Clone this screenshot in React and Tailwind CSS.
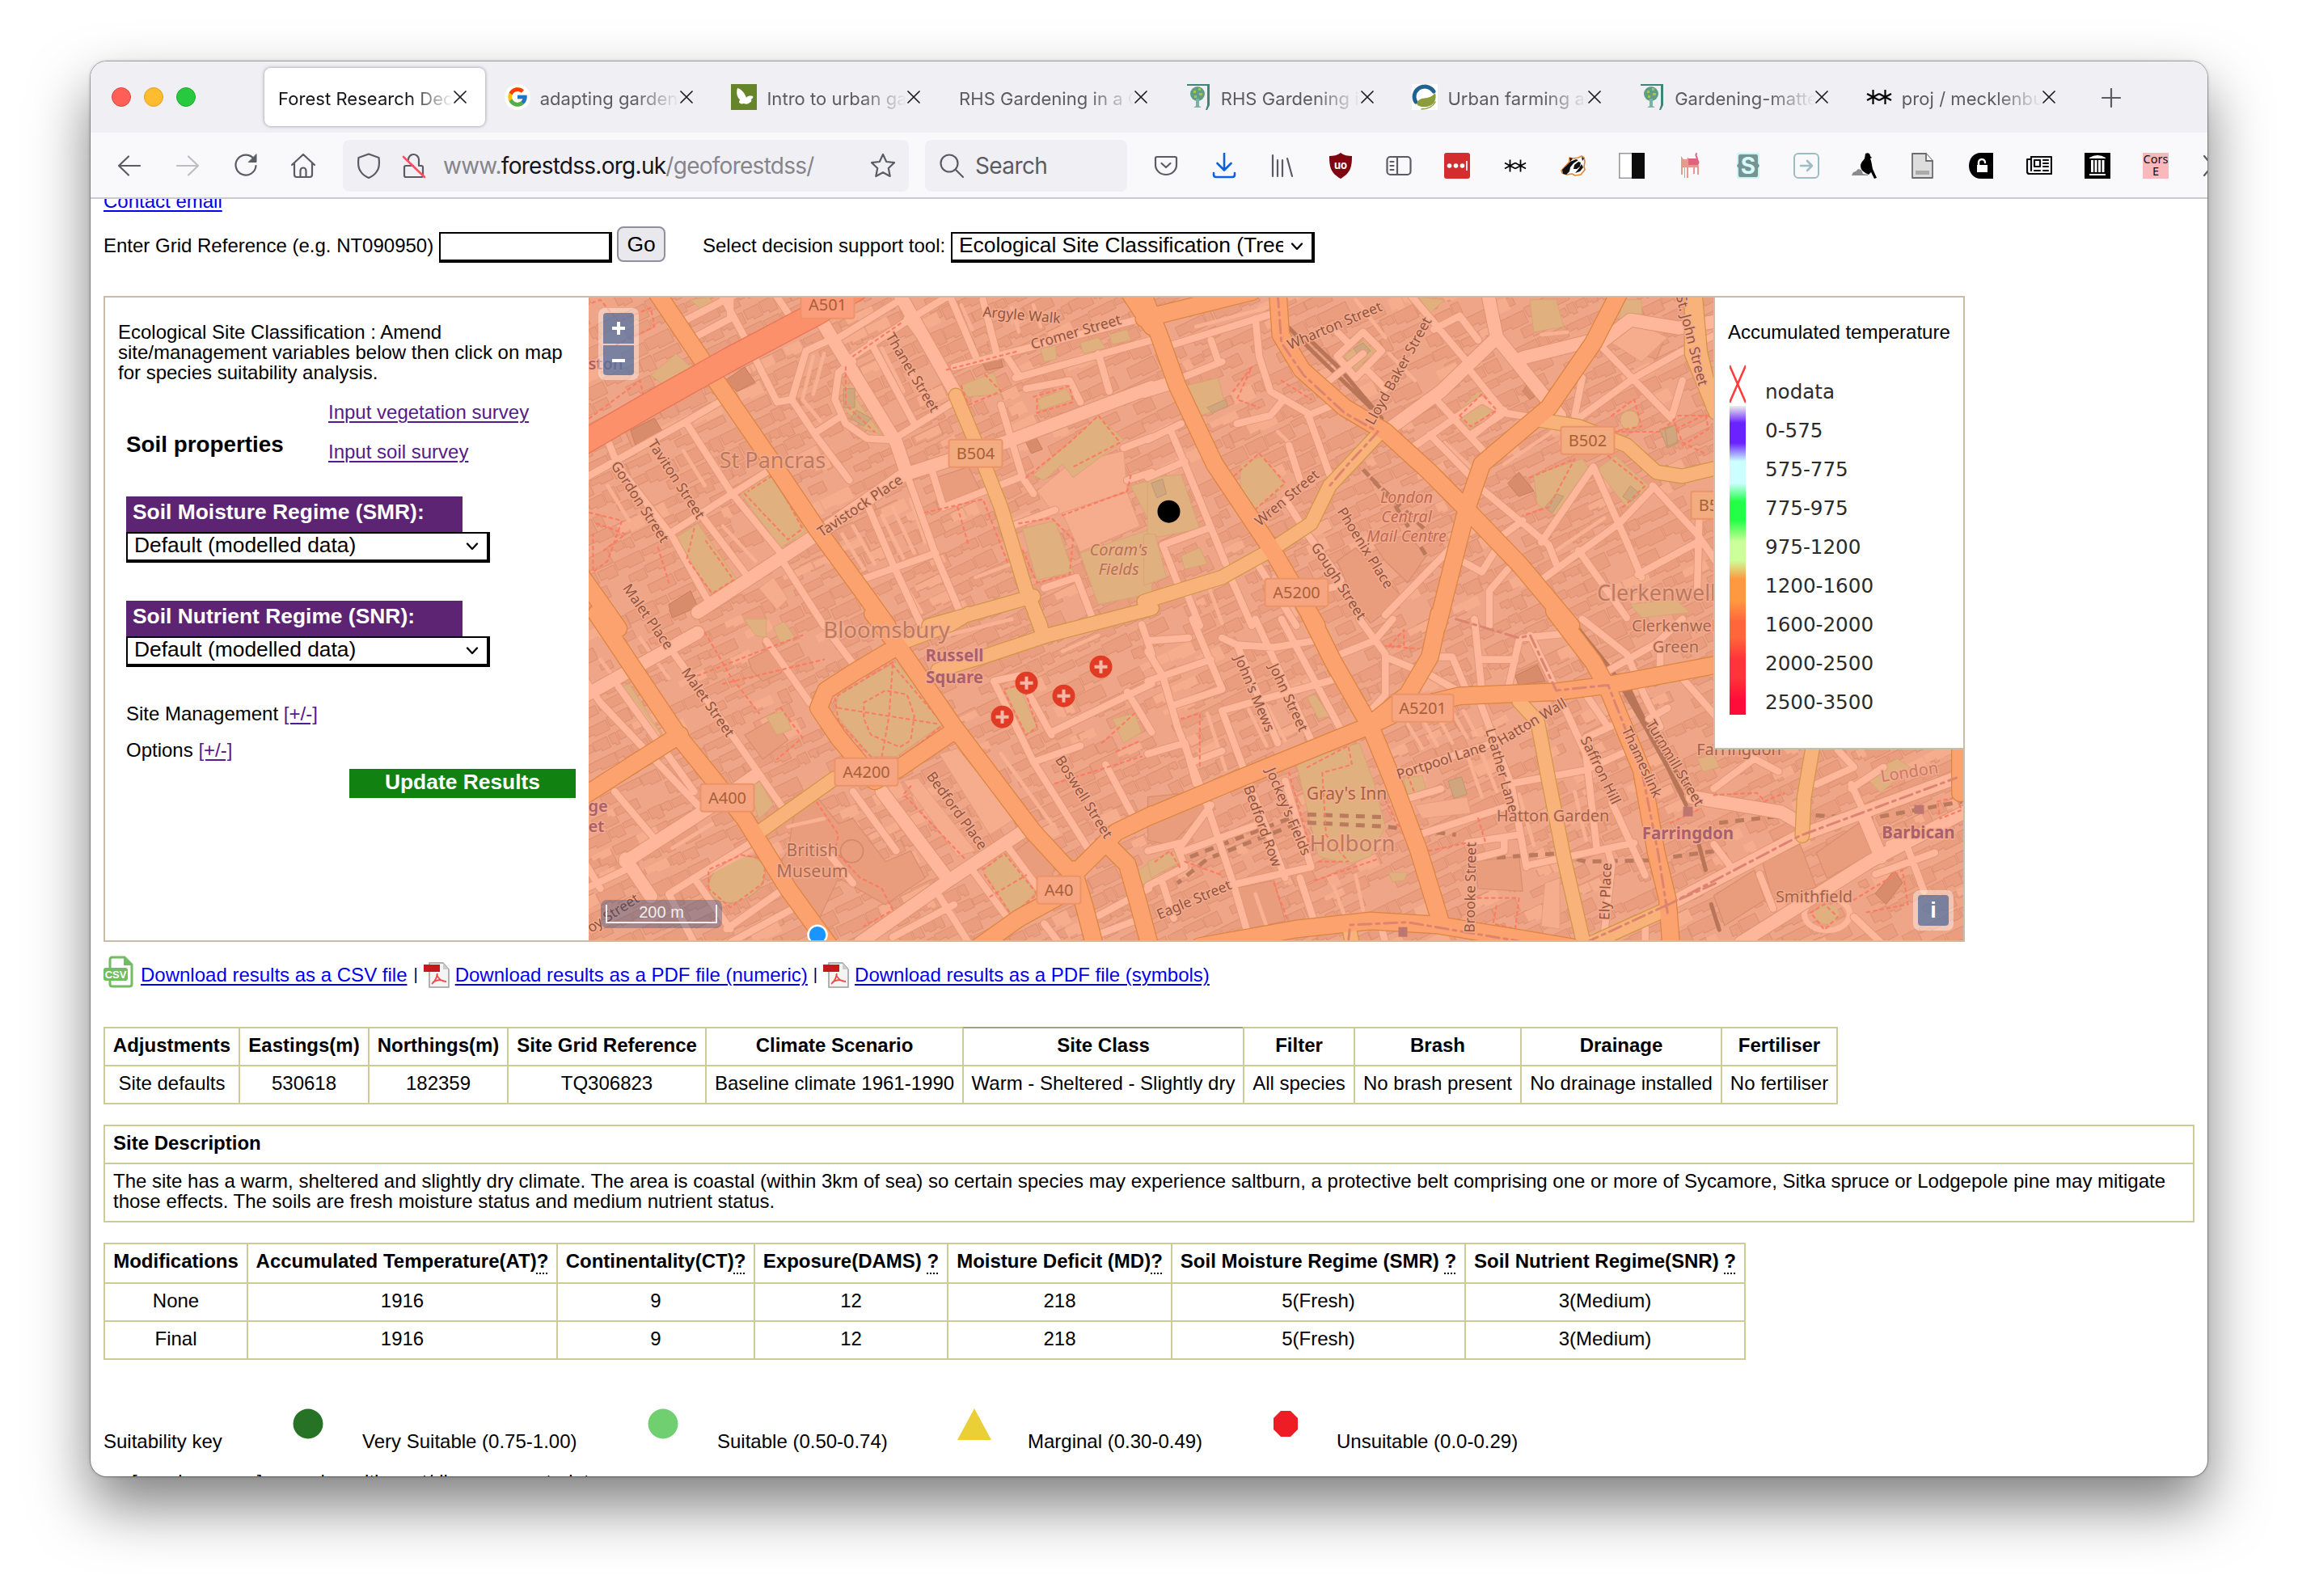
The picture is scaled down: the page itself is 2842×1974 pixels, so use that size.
import React from "react";
import { FcGoogle } from "react-icons/fc";

/* ---------- map data ---------- */

// Each sheet: origin x, origin y, horizontal scale, vertical scale.
const SHEETS = {
  a: [725, 360, 1 / 2.24, 1 / 3],
  b: [1420, 360, 1 / 2.178, 1 / 3],
  c: [725, 765, 1 / 2.24, 1 / 3],
  d: [1420, 765, 1 / 2.178, 1 / 3],
  e: [2060, 350, 1 / 3, 1 / 1.889],
};

function line(sheet, pts) {
  const [ox, oy, sx, sy] = SHEETS[sheet];
  return (
    "M" +
    pts
      .split(" ")
      .map((p) => {
        const [x, y] = p.split(",").map(Number);
        return `${(ox + x * sx).toFixed(1)} ${(oy + y * sy).toFixed(1)}`;
      })
      .join("L")
  );
}
const join = (list) => list.map(([s, p]) => line(s, p)).join("");

const PRIMARY = join([
  ["a", "190,-10 340,290 520,640 640,880 760,1100 835,1240"],
  ["c", "795,-20 865,100 1020,400 1240,790 1350,950"],
  ["a", "-10,1060 90,1250"],
  ["c", "30,-20 150,220 260,440 440,740 560,1000 690,1240"],
  ["c", "-10,660 130,540 260,430"],
  ["c", "865,100 740,200 665,265 645,330 700,440 800,600"],
  ["c", "1025,410 860,560 800,600"],
  ["c", "1350,930 1380,1060 1415,1240"],
  ["c", "1350,950 1470,790 1570,725"],
  ["d", "-10,740 250,590 590,400 690,335 840,285 1100,270 1240,245 1530,170"],
  ["c", "1440,830 1500,910 1530,1050 1568,1240"],
  ["c", "1350,1000 1200,1110 1090,1215"],
  ["a", "1490,-30 1568,130"],
  ["b", "-10,100 280,0"],
  ["b", "-10,20 30,160 80,350 180,640 340,970 455,1240"],
  ["d", "435,-20 500,160 600,400 660,600 730,860 790,1130"],
  ["b", "350,0 358,160 415,290 530,430 640,520 760,670 860,810 1000,1010 1140,1240"],
  ["d", "1095,-30 1200,160 1240,260 1330,560 1370,870 1400,1040 1410,1220"],
  ["b", "1275,-10 1200,190 1080,430 900,640 860,800 780,1240"],
  ["d", "785,-20 760,140 700,280 600,390"],
  ["d", "140,1215 400,1150 600,1120 780,1135 1000,1185 1150,1220"],
  ["e", "1095,1070 1095,1190"],
]);
const SECONDARY = join([
  ["a", "1025,385 1080,560 1150,800 1220,1110 1260,1240"],
  ["c", "1245,-20 1268,60"],
  ["a", "1240,1130 950,1240"],
  ["c", "870,90 1010,20 1060,-20"],
  ["c", "975,190 1100,140 1280,60 1568,-40"],
  ["b", "-10,1150 200,1060 330,960 440,860 490,720 620,530"],
  ["b", "1050,475 1160,500 1290,570 1370,670 1440,685 1530,655"],
  ["d", "1000,305 1050,380 1080,600 1120,880 1175,1210"],
  ["c", "480,790 690,590"],
  ["d", "1190,1205 1400,1075"],
  ["b", "1465,-10 1465,230 1530,450"],
  ["d", "540,1130 552,1210"],
  ["e", "548,1080 515,1200 508,1290"],
  ["e", "110,20 130,160 178,290"],
]);
const TERTIARY = join([
  ["a", "310,1190 630,910 880,680 1160,560 1568,355"],
  ["b", "-10,370 60,340"],
  ["a", "640,80 860,560 890,680"],
  ["a", "865,0 1030,390"],
  ["b", "640,520 790,370 940,170 915,0"],
  ["b", "940,170 1110,460"],
  ["b", "1010,245 1200,180"],
  ["c", "-10,290 310,50"],
  ["c", "110,900 330,710 470,580"],
  ["c", "110,890 180,1030"],
  ["c", "760,1200 1000,975 1220,780"],
  ["c", "820,640 1000,960"],
  ["e", "280,1540 760,1350 1110,1235"],
  ["e", "0,1455 500,1290 1100,1150"],
  ["b", "1300,105 1430,135 1530,110"],
  ["b", "1300,105 1220,190"],
  ["e", "100,1200 240,1215 430,1235 500,1260"],
  ["e", "740,1250 800,1340"],
]);
const MINOR = join([
  ["a", "380,20 440,170 530,410 570,400 640,540 730,700"],
  ["a", "270,110 430,0"],
  ["a", "300,170 400,100 400,30"],
  ["a", "525,10 560,80"],
  ["a", "690,180 860,40"],
  ["a", "610,220 690,170"],
  ["a", "610,220 570,400"],
  ["a", "740,240 900,100 1000,20"],
  ["a", "740,260 700,300 690,400 720,490 780,545 850,550"],
  ["a", "640,520 710,460"],
  ["a", "790,190 910,490"],
  ["a", "850,550 1030,400"],
  ["a", "890,100 1000,300"],
  ["a", "1010,20 1080,240"],
  ["a", "1100,30 1140,240"],
  ["a", "1020,280 1568,90"],
  ["a", "1190,320 1568,180"],
  ["a", "1160,230 1200,310"],
  ["a", "1420,230 1450,370"],
  ["a", "0,690 280,480 370,410"],
  ["a", "60,550 90,650 240,910 340,1150"],
  ["a", "280,490 400,740 540,970"],
  ["a", "230,900 500,670"],
  ["a", "320,830 450,1060"],
  ["a", "780,790 850,1010 930,1240"],
  ["a", "890,680 970,980 1040,1200"],
  ["a", "760,1070 970,970"],
  ["a", "960,670 990,800 1200,690"],
  ["a", "1150,420 1210,690 1240,750"],
  ["a", "1180,870 1300,810"],
  ["a", "1220,360 1340,330 1370,410"],
  ["a", "1490,580 1568,540"],
  ["a", "1270,1100 1360,1060 1400,1200"],
  ["a", "550,1010 660,1240"],
  ["a", "1500,700 1568,670"],
  ["b", "60,200 340,80"],
  ["b", "170,180 190,260"],
  ["b", "290,100 300,240 330,370 430,450 490,680"],
  ["b", "90,320 200,260"],
  ["b", "430,460 500,420"],
  ["b", "240,490 330,460 360,410"],
  ["b", "0,550 90,490"],
  ["b", "60,510 100,640 210,1010"],
  ["b", "0,690 100,630"],
  ["b", "380,570 410,700"],
  ["b", "480,340 580,230"],
  ["b", "510,240 580,150 630,220 560,320 510,240"],
  ["b", "510,150 540,190"],
  ["b", "700,0 860,260"],
  ["b", "590,290 640,360"],
  ["b", "770,390 910,600"],
  ["b", "690,600 900,400 960,450 1050,470"],
  ["b", "860,280 960,450"],
  ["b", "770,140 840,90 890,180"],
  ["b", "870,530 950,460"],
  ["b", "760,530 880,700"],
  ["b", "960,440 870,540"],
  ["b", "1220,200 1410,470 1440,330"],
  ["b", "1160,470 1310,320 1440,220 1530,160"],
  ["b", "1170,320 1150,460"],
  ["b", "880,710 1080,940 1100,1010"],
  ["b", "1200,650 1300,960 1330,1060"],
  ["b", "1200,650 1060,930"],
  ["b", "1050,1080 1270,860 1360,730"],
  ["b", "1360,720 1480,900 1530,1000"],
  ["b", "1485,840 1480,1120"],
  ["b", "1160,960 1290,1210"],
  ["b", "940,920 1010,850"],
  ["b", "640,1200 810,960"],
  ["b", "370,770 430,900 520,1070"],
  ["b", "40,940 160,880"],
  ["b", "40,940 80,1080"],
  ["b", "100,1100 140,1240"],
  ["b", "220,1050 280,1240"],
  ["b", "300,1020 400,1240"],
  ["b", "460,1110 520,1090"],
  ["b", "820,980 900,1040 950,930"],
  ["b", "970,1030 920,1110 920,1240"],
  ["b", "1320,1050 1480,930"],
  ["c", "0,230 40,310 310,690"],
  ["c", "90,250 300,640"],
  ["c", "240,120 400,420 540,690"],
  ["c", "500,80 620,310"],
  ["c", "680,60 760,200"],
  ["c", "80,640 200,830"],
  ["c", "0,1000 110,930"],
  ["c", "0,910 40,1000"],
  ["c", "230,1020 470,820"],
  ["c", "300,960 400,1150"],
  ["c", "390,1150 560,990"],
  ["c", "230,1020 300,1200"],
  ["c", "400,1200 580,1070"],
  ["c", "740,640 860,860"],
  ["c", "850,1180 1020,1060"],
  ["c", "1070,930 1180,1130"],
  ["c", "980,1030 1060,1200"],
  ["c", "1160,830 1260,1010"],
  ["c", "1130,230 1240,530 1400,870"],
  ["c", "1130,230 1200,210 1290,430"],
  ["c", "1290,420 1568,240"],
  ["c", "1240,530 1370,470"],
  ["c", "1440,540 1520,740"],
  ["c", "1500,270 1568,420"],
  ["c", "1540,20 1568,130"],
  ["c", "1420,1170 1520,1120"],
  ["c", "1420,1100 1560,1000"],
  ["c", "1270,1130 1310,1200"],
  ["c", "660,850 740,980"],
  ["d", "0,80 110,70"],
  ["d", "0,230 170,150"],
  ["d", "0,120 40,210 80,400 150,650 230,980 270,1170"],
  ["d", "120,0 200,260 70,320"],
  ["d", "200,70 240,95 340,105 450,80"],
  ["d", "240,95 350,460"],
  ["d", "290,0 440,450"],
  ["d", "360,0 520,410"],
  ["d", "200,340 500,225"],
  ["d", "200,340 270,600 370,960"],
  ["d", "0,500 100,460 130,610"],
  ["d", "120,530 200,490"],
  ["d", "0,860 90,830"],
  ["d", "90,840 170,690"],
  ["d", "100,860 300,760"],
  ["d", "0,990 100,920 80,850"],
  ["d", "230,985 440,920 370,600"],
  ["d", "410,960 450,1130"],
  ["d", "40,980 70,1110"],
  ["d", "520,130 610,80 660,0"],
  ["d", "570,0 640,130 640,280 600,340"],
  ["d", "640,140 710,180"],
  ["d", "750,200 840,270"],
  ["d", "780,140 820,140 860,270"],
  ["d", "880,0 900,270"],
  ["d", "900,150 990,150"],
  ["d", "1000,80 970,260"],
  ["d", "1010,70 1150,50"],
  ["d", "1030,60 1100,260"],
  ["d", "890,290 980,620 1020,920"],
  ["d", "660,580 930,460 1050,390"],
  ["d", "690,670 790,630"],
  ["d", "730,800 980,690"],
  ["d", "980,610 1180,560 1290,490"],
  ["d", "1110,290 1180,500 1210,860"],
  ["d", "1180,440 1260,390"],
  ["d", "1180,280 1240,400"],
  ["d", "1020,915 1310,830"],
  ["d", "1250,680 1340,950"],
  ["d", "860,830 1000,800"],
  ["d", "890,885 960,860 960,810"],
  ["d", "1240,860 1250,910 1230,1160"],
  ["d", "1170,0 1290,130 1340,290 1380,400"],
  ["d", "1230,200 1370,90 1440,0"],
  ["d", "1380,90 1380,180"],
  ["d", "1440,220 1530,360"],
  ["d", "1350,370 1400,330"],
  ["d", "630,1150 640,1200"],
  ["d", "1340,1120 1340,1200"],
  ["e", "180,1180 330,1110 420,1140"],
  ["e", "330,1110 300,1090"],
  ["e", "560,1170 700,1130 640,1090"],
  ["e", "690,1180 810,1130"],
  ["e", "690,1170 740,1240"],
  ["e", "830,1310 1060,1250"],
  ["e", "900,1320 960,1420"],
  ["e", "780,1380 1000,1330"],
  ["e", "180,1310 240,1360"],
  ["e", "350,1380 400,1460"],
  ["e", "700,1480 800,1540"],
]);
// Narrow service lanes and building terraces between the streets.
const LANES = join([
  ["a", "820,210 880,370"],
  ["a", "850,200 960,430"],
  ["a", "630,240 600,400 650,480"],
  ["a", "660,230 630,380"],
  ["a", "270,590 330,720"],
  ["a", "710,900 770,1030"],
  ["a", "740,870 800,1010"],
  ["a", "820,830 880,990"],
  ["a", "850,800 910,970"],
  ["a", "900,770 940,930"],
  ["a", "380,870 470,1000"],
  ["a", "1040,50 1070,140"],
  ["a", "1180,60 1200,150"],
  ["a", "1240,50 1260,130"],
  ["a", "870,1060 930,1190"],
  ["a", "1080,1060 1200,1000"],
  ["a", "60,720 120,850"],
  ["b", "560,30 640,170"],
  ["b", "650,230 720,330"],
  ["b", "130,130 320,60"],
  ["b", "350,520 380,560"],
  ["b", "800,560 900,690"],
  ["b", "960,640 1090,520"],
  ["b", "1100,960 1230,840"],
  ["b", "160,1080 200,1230"],
  ["b", "340,1060 400,1200"],
  ["b", "1060,160 1130,150"],
  ["c", "40,150 200,430"],
  ["c", "150,70 230,220"],
  ["c", "860,680 960,870"],
  ["c", "1150,500 1290,760"],
  ["c", "560,770 660,740"],
  ["c", "240,850 350,760"],
  ["c", "260,1000 500,830"],
  ["c", "900,1150 960,1100"],
  ["c", "1000,60 1180,0"],
  ["c", "1320,120 1420,60"],
  ["d", "700,390 740,480"],
  ["d", "740,370 780,470"],
  ["d", "780,355 820,460"],
  ["d", "820,345 860,440"],
  ["d", "850,340 885,430"],
  ["d", "860,500 900,660"],
  ["d", "900,500 940,640"],
  ["d", "270,330 320,470"],
  ["d", "320,320 370,450"],
  ["d", "160,350 210,560"],
  ["d", "1000,650 1040,840"],
  ["d", "1150,640 1180,820"],
  ["d", "290,1020 320,1140"],
  ["d", "500,990 530,1100"],
  ["d", "560,950 580,1080"],
]);
const PATHS = join([
  ["a", "0,50 40,30 90,110 180,60 190,130 80,200"],
  ["a", "10,470 150,330 160,390 60,460"],
  ["a", "300,880 280,990 350,1120 410,1070 330,920"],
  ["a", "440,750 560,920 600,880 520,680 450,740"],
  ["a", "10,820 100,850 60,1000 20,1040 20,900"],
  ["a", "30,860 110,900 50,960"],
  ["a", "200,950 230,1080"],
  ["a", "720,280 720,420 800,520"],
  ["a", "740,240 880,110"],
  ["a", "1000,290 1200,220"],
  ["a", "1040,350 1060,420 1150,370 1100,300"],
  ["a", "1240,390 1340,350 1350,410 1250,450 1250,390"],
  ["a", "1220,690 1340,560 1420,460 1480,560 1350,650"],
  ["a", "1200,860 1290,840 1350,920 1340,1050 1250,1080 1210,960"],
  ["a", "940,820 1100,770 1170,1010"],
  ["a", "1320,830 1500,740 1510,680"],
  ["a", "1030,800 1060,940"],
  ["b", "220,700 300,600 370,710 280,820"],
  ["b", "230,370 280,280 240,400 300,430"],
  ["b", "360,330 440,400"],
  ["b", "840,460 900,380 940,440 870,500 840,460"],
  ["b", "1250,460 1310,400 1330,500 1250,520 1380,520 1430,460 1510,460"],
  ["b", "1030,690 1150,620 1080,800 1010,830"],
  ["b", "1240,610 1340,720 1280,800"],
  ["b", "1420,490 1440,560 1500,600"],
  ["c", "330,50 400,210 480,350"],
  ["c", "310,210 480,120 600,60"],
  ["c", "380,240 660,150"],
  ["c", "540,330 600,440 530,520"],
  ["c", "850,160 690,290 700,380 790,510"],
  ["c", "850,170 990,390 890,500"],
  ["c", "700,330 980,390"],
  ["c", "850,170 840,360 820,510"],
  ["c", "770,310 830,265 890,280 910,360 900,450 870,475 790,430 770,370 770,310"],
  ["c", "900,620 880,650 1050,890"],
  ["c", "340,1000 340,930 430,875 500,890 490,980 400,1070 340,1000"],
  ["c", "640,680 700,800 690,860 760,960 820,1000 850,1080 770,1140"],
  ["c", "1100,930 1160,870 1250,1020 1180,1100 1100,940"],
  ["c", "1120,1030 1220,950"],
  ["c", "1160,260 1210,240 1250,400 1220,430 1160,270"],
  ["c", "1430,460 1520,350"],
  ["c", "1300,610 1540,510"],
  ["c", "1470,490 1540,450"],
  ["c", "580,720 640,670"],
  ["d", "430,550 540,470 550,540 470,570 480,800 540,900 450,900"],
  ["d", "450,970 620,890"],
  ["d", "650,100 690,40 690,100 640,100 730,110"],
  ["d", "380,570 440,860"],
  ["d", "700,580 720,650"],
  ["d", "90,370 140,350 140,550"],
  ["d", "20,900 60,860 90,930"],
  ["d", "100,900 200,950"],
  ["d", "640,670 670,760 760,860 860,830"],
  ["d", "890,1035 1000,1035 990,1150 930,1130 940,1060"],
  ["d", "340,980 380,1130"],
  ["d", "890,740 910,830"],
  ["e", "180,1195 340,1190 370,1210 440,1190"],
  ["e", "20,1260 120,1230"],
  ["e", "700,1440 880,1370 900,1450 740,1470"],
  ["e", "1010,1210 1080,1200 1100,1230 1020,1250 1010,1210"],
  ["e", "40,340 150,305 160,340 60,380"],
  ["e", "540,1470 590,1450 640,1480 590,1510 540,1470"],
]);
const RAIL = join([
  ["b", "370,120 450,230 600,430"],
  ["b", "430,170 520,290 630,470"],
  ["b", "880,840 1000,1010 1100,1150"],
  ["d", "1150,20 1250,190 1340,400 1440,650"],
  ["d", "1170,60 1290,260 1390,500 1460,640"],
  ["d", "1290,240 1450,690"],
  ["e", "120,1300 150,1370"],
  ["e", "170,1450 200,1510"],
]);
const TUNNEL = join([
  ["d", "430,725 640,735"],
  ["d", "380,740 100,890"],
  ["d", "430,755 640,770 830,800"],
  ["d", "400,760 160,890 80,980"],
  ["d", "940,885 1100,870 1180,900 1350,895 1530,860"],
  ["b", "580,660 660,780 750,980"],
  ["b", "600,690 790,940"],
  ["e", "200,1260 480,1240 760,1250 1100,1210"],
]);
const METRO = join([
  ["b", "350,10 360,190 420,310 530,450 620,520 540,640 490,720"],
  ["d", "540,1200 545,1135 700,1125 870,1165 1000,1195"],
  ["d", "830,0 1000,70 1030,60 1100,265 1240,245 1330,560 1375,870 1400,1090"],
  ["d", "1180,1200 1400,1060 1530,980"],
  ["e", "0,1455 500,1290 1080,1155"],
]);
const GREENS = [
  ["a", "180,310 250,230 300,290 220,350"],
  ["a", "290,30 340,20 360,50 320,65"],
  ["a", "240,920 310,860 420,1070 350,1120"],
  ["a", "430,750 510,680 610,890 540,950"],
  ["a", "720,330 760,420 820,530 770,510 720,440"],
  ["a", "1035,350 1130,300 1150,380 1060,390"],
  ["a", "1250,400 1330,360 1350,400 1260,440"],
  ["a", "1370,190 1420,170 1440,210 1380,230"],
  ["a", "1260,210 1300,200 1305,250 1270,260"],
  ["a", "1450,160 1500,140 1510,180 1460,195"],
  ["a", "1240,680 1420,460 1490,550 1350,690 1320,640 1270,700"],
  ["a", "1370,970 1568,880 1568,1120 1420,1160"],
  ["a", "1210,880 1300,850 1350,1040 1250,1070"],
  ["a", "1510,720 1568,700 1568,870"],
  ["b", "0,690 90,680 140,880 30,910 0,900"],
  ["b", "-10,900 20,900 50,1060 -10,1090"],
  ["b", "90,980 140,950 160,1010 100,1030"],
  ["b", "100,350 190,320 210,430 140,460"],
  ["b", "250,640 310,610 370,720 280,820 250,740"],
  ["b", "530,240 580,180 610,220 560,290"],
  ["b", "830,450 890,370 940,430 870,510"],
  ["b", "1030,30 1100,30 1120,130 1040,150"],
  ["b", "1280,30 1330,30 1330,110 1270,100"],
  ["b", "730,20 800,30 760,80"],
  ["b", "1040,680 1170,620 1190,660 1100,830 1050,790"],
  ["b", "1260,610 1350,720 1290,800 1210,660"],
  ["b", "1300,1160 1420,1140 1460,1190 1330,1210"],
  ["c", "860,160 1000,380 860,510 790,510 690,350 700,280"],
  ["c", "1100,930 1160,860 1250,1010 1180,1100"],
  ["c", "500,360 550,340 570,410 530,430"],
  ["c", "450,620 480,600 520,690 480,740"],
  ["c", "1160,260 1200,250 1250,400 1220,430"],
  ["c", "1460,370 1520,350 1540,420 1490,460"],
  ["c", "520,30 550,10 580,70 540,90"],
  ["c", "440,0 500,0 500,70 470,60"],
  ["c", "100,250 120,240 210,430 190,430"],
  ["c", "1520,940 1568,900 1568,990 1530,980"],
  ["d", "400,530 570,460 610,610 640,770 600,880 540,910 460,880"],
  ["d", "690,590 740,580 750,640 700,650"],
  ["d", "0,900 70,860 90,900 10,960"],
  ["d", "430,290 450,280 490,360 460,370"],
  ["d", "650,940 700,940 690,970 660,975"],
  ["e", "740,1150 860,1110 910,1130 800,1190"],
  ["e", "120,1110 180,1100 200,1130 140,1140"],
];
const PITCHES = [
  ["a", "715,360 745,360 745,430 715,430"],
  ["a", "750,440 790,470 770,500 735,470"],
  ["b", "555,210 580,190 600,220 575,250"],
  ["b", "1380,510 1410,500 1430,560 1400,580"],
  ["b", "1070,800 1100,750 1120,760 1090,820"],
  ["b", "1280,760 1300,720 1325,750 1300,780"],
  ["b", "160,430 210,400 215,425 175,450"],
  ["b", "10,710 40,695 50,750 25,765"],
  ["d", "810,600 845,585 860,650 825,665"],
  ["e", "0,340 40,330 45,370 10,380"],
];
const LIGHTS = [
  ["a", "1320,820 1500,745 1535,870 1370,965"],
  ["a", "1340,640 1490,590 1500,740 1300,830 1250,740"],
  ["c", "980,500 1030,480 1190,740 1120,800"],
  ["c", "880,600 920,590 1080,860 1030,880"],
  ["a", "480,1100 520,1060 560,1140 530,1180"],
  ["b", "1240,180 1310,110 1400,170 1330,260"],
  ["d", "1070,980 1110,960 1110,1150 1060,1140"],
  ["d", "720,690 860,660 870,720 740,740"],
  ["e", "210,1010 330,990 350,1080 210,1080"],
];
const BIG_BUILDINGS = [
  ["a", "110,520 190,470 220,540 130,580"],
  ["a", "390,330 440,280 470,340 420,370"],
  ["a", "1100,265 1150,250 1155,280 1110,292"],
  ["a", "970,690 1060,650 1090,730 1000,790"],
  ["a", "1310,750 1370,690 1400,720 1430,690 1445,730 1360,800"],
  ["c", "450,150 510,110 550,150 540,200 490,230 460,190"],
  ["c", "440,430 520,370 560,450 490,520"],
  ["c", "580,700 640,660 700,760 740,740 830,900 900,860 940,960 830,1060 700,960 640,1130 540,900 560,860"],
  ["c", "1190,860 1240,810 1300,920 1290,960 1240,960"],
  ["b", "610,940 700,900 750,980 700,1080 640,1000"],
  ["b", "510,1000 560,950 690,1140 600,1230 560,1160"],
  ["b", "1300,130 1390,180 1370,250 1320,230"],
  ["d", "0,660 150,640 160,700 60,840 0,820"],
  ["d", "230,1000 340,970 370,1120 270,1150"],
  ["d", "880,900 1000,880 1010,1010 890,1000"],
  ["d", "990,200 1060,160 1090,230 1000,250"],
  ["e", "360,1350 500,1310 560,1410 400,1440"],
  ["e", "560,1330 720,1260 770,1330 600,1390"],
  ["e", "180,1430 330,1370 370,1440 220,1500"],
];
const LANDMARKS = [
  ["a", "125,515 190,470 215,525 140,575"],
  ["a", "385,330 440,280 468,335 420,370"],
  ["a", "1100,265 1150,250 1155,280 1110,292"],
  ["a", "1215,545 1245,535 1265,585 1235,600"],
  ["a", "230,1160 290,1110 310,1170 240,1210"],
  ["b", "970,710 1000,670 1040,740 1000,760"],
  ["b", "1010,370 1030,330 1050,380 1030,400"],
  ["d", "990,210 1050,170 1070,230 1000,245"],
  ["e", "780,1425 850,1370 880,1400 820,1450"],
];

// Deterministic building footprints laid on a rotated street grid.
function footprints(seed, threshold) {
  let s = seed;
  const rnd = () => {
    s = (s * 16807) % 2147483647;
    return s / 2147483647;
  };
  let d = "";
  for (let y = -760; y < 760; y += 21) {
    for (let x = -1080; x < 1080; ) {
      const w = 9 + rnd() * 30;
      const h = 9 + rnd() * 9;
      if (rnd() > threshold) {
        d += `M${x.toFixed(0)} ${(y + rnd() * 3).toFixed(0)}h${w.toFixed(0)}v${h.toFixed(0)}h-${(w * 0.6).toFixed(0)}v-3h-${(w * 0.4).toFixed(0)}z`;
      }
      x += w + 2;
    }
  }
  return d;
}
const HOUSES_A = footprints(77, 0.15);
const HOUSES_B = footprints(4242, 0.88);

const SHIELDS = [
  ["A501", 1024, 376, 66, "#fb9c7b"],
  ["B504", 1207, 560, 66, "#f3ab80"],
  ["A5200", 1604, 732, 78, "#f7a581"],
  ["B502", 1964, 544, 66, "#f3ab80"],
  ["B501", 2125, 624, 66, "#f3ab80"],
  ["A4200", 1072, 954, 78, "#f7a581"],
  ["A400", 900, 986, 66, "#f7a581"],
  ["A40", 1310, 1100, 54, "#f7a581"],
  ["A5201", 1760, 875, 76, "#f7a581"],
];
const STREETS = [
  ["Argyle Walk", 1264, 389, 5],
  ["Cromer Street", 1331, 410, -16],
  ["Thanet Street", 1129, 460, 59],
  ["Taviton Street", 837, 592, 57],
  ["Gordon Street", 792, 620, 57],
  ["Tavistock Place", 1064, 625, -34],
  ["Malet Place", 802, 762, 55],
  ["Malet Street", 876, 868, 55],
  ["Bedford Place", 1184, 1002, 54],
  ["Boswell Street", 1341, 985, 58],
  ["Fitzroy Street", 744, 1138, -33],
  ["Wharton Street", 1651, 402, -23],
  ["Lloyd Baker Street", 1730, 458, -61],
  ["Wren Street", 1592, 615, -40],
  ["Phoenix Place", 1689, 677, 58],
  ["Gough Street", 1656, 718, 57],
  ["St. John Street", 2093, 420, 76],
  ["John's Mews", 1552, 857, 67],
  ["John Street", 1594, 862, 65],
  ["Jockey's Fields", 1594, 1003, 67],
  ["Bedford Row", 1562, 1021, 70],
  ["Eagle Street", 1477, 1112, -23],
  ["Portpool Lane", 1783, 940, -18],
  ["Leather Lane", 1858, 952, 74],
  ["Hatton Wall", 1895, 892, -31],
  ["Saffron Hill", 1980, 952, 64],
  ["Turnmill Street", 2072, 943, 59],
  ["Thameslink", 2031, 942, 65],
  ["Brooke Street", 1819, 1097, -89],
  ["Ely Place", 1986, 1102, -88],
];
const PLACES = [
  ["St Pancras", 956, 569, 27, "#b97a62"],
  ["Bloomsbury", 1097, 778, 27.5, "#b97a62"],
  ["Clerkenwell", 2049, 733, 27, "#b97a62"],
  ["Holborn", 1673, 1042, 27.5, "#b97a62"],
  ["British", 1005, 1051, 21, "#a96c56"],
  ["Museum", 1005, 1077, 21.5, "#a96c56"],
  ["Clerkenwell", 2073, 773, 20, "#a36752"],
  ["Green", 2073, 799, 20, "#a36752"],
  ["Gray's Inn", 1666, 981, 21, "#a0653f"],
  ["Hatton Garden", 1921, 1008, 20, "#a0624c"],
  ["Farringdon", 2151, 926, 20, "#a0624c"],
  ["Smithfield", 2244, 1108, 20, "#a0624c"],
];
const STATIONS = [
  ["Russell", 1181, 810],
  ["Square", 1181, 837],
  ["Farringdon", 2088, 1030],
  ["Barbican", 2373, 1029],
];
const ITALICS = [
  ["Coram's", 1384, 679, 20, "#a87b4e"],
  ["Fields", 1384, 703, 20, "#a87b4e"],
  ["London", 1740, 614, 19.5, "#c06a55"],
  ["Central", 1740, 638, 19.5, "#c06a55"],
  ["Mail Centre", 1740, 662, 19.5, "#c06a55"],
];

function StreetMap() {
  return (
    <svg viewBox="728.5 367.3 1700 795" className="block h-[795px] w-[1700px]" strokeLinejoin="round" strokeLinecap="round">
      <rect x="727" y="366" width="1704" height="800" fill="#efa588" />
      <g transform="translate(1580 766) rotate(-26)">
        <path d={HOUSES_A} fill="#ea9e7f" stroke="#dc9172" strokeWidth="1" />
        <path d={HOUSES_B} fill="#f6ad8e" />
      </g>
      {BIG_BUILDINGS.map(([s, p], i) => (
        <path key={i} d={line(s, p) + "Z"} fill="#e99d7d" stroke="#d98e6e" strokeWidth="1.2" />
      ))}
      {LIGHTS.map(([s, p], i) => (
        <path key={i} d={line(s, p) + "Z"} fill="#f5ad8e" stroke="#e79c7c" />
      ))}
      {GREENS.map(([s, p], i) => (
        <path key={i} d={line(s, p) + "Z"} fill="#e0b17f" stroke="#d9a574" />
      ))}
      {PITCHES.map(([s, p], i) => (
        <path key={i} d={line(s, p) + "Z"} fill="#cfa67e" stroke="#c0976c" />
      ))}
      {LANDMARKS.map(([s, p], i) => (
        <path key={i} d={line(s, p) + "Z"} fill="#d98c6b" stroke="#c97c5c" />
      ))}
      <ellipse cx="912" cy="1087" rx="37" ry="26" transform="rotate(-28 912 1087)" fill="#e0b17f" stroke="#cda06c" />
      <circle cx="2016" cy="519" r="12" fill="#e6b183" stroke="#d29f6d" />
      <circle cx="1054" cy="1052" r="14" fill="#e99d7d" stroke="#d08765" strokeWidth="1.5" />
      <ellipse cx="2260" cy="1130" rx="28" ry="20" fill="none" stroke="#feb79b" strokeWidth="7" />
      <ellipse cx="2260" cy="1130" rx="15" ry="12" fill="#e0b17f" />
      <path d={LANES} fill="none" stroke="#f9b194" strokeWidth="4.5" />
      <path d={RAIL} fill="none" stroke="#b87558" strokeWidth="5" />
      <path d={TUNNEL} fill="none" stroke="#bb795d" strokeWidth="5" strokeDasharray="11 9" strokeLinecap="butt" />
      <path d={MINOR} fill="none" stroke="#e29878" strokeWidth="10.5" />
      <path d={TERTIARY} fill="none" stroke="#de9472" strokeWidth="18" />
      <path d={MINOR} fill="none" stroke="#feb79b" strokeWidth="8.5" />
      <path d={TERTIARY} fill="none" stroke="#feb79b" strokeWidth="16" />
      <path d={PATHS} fill="none" stroke="#fb7c62" strokeWidth="2.2" strokeDasharray="3.5 5" />
      <path d={SECONDARY} fill="none" stroke="#d09648" strokeWidth="19" />
      <path d={PRIMARY} fill="none" stroke="#dc8440" strokeWidth="23" />
      <path d={SECONDARY} fill="none" stroke="#f9b37a" strokeWidth="16.5" />
      <path d={PRIMARY} fill="none" stroke="#fca26f" strokeWidth="20.5" />
      <path d={line("a", "-20,570 200,400 400,250 640,80 760,-20")} fill="none" stroke="#e97456" strokeWidth="31" />
      <path d={line("a", "-20,570 200,400 400,250 640,80 760,-20")} fill="none" stroke="#fc906b" strokeWidth="28.5" />
      <path d={METRO} fill="none" stroke="#dc8470" strokeWidth="3" strokeDasharray="16 6 4 6" />
      <g fill="#bd7670">
        <rect x="2082" y="997" width="12" height="12" />
        <rect x="2368" y="995" width="12" height="11" />
        <rect x="1730" y="1146" width="11" height="12" />
      </g>
      {SHIELDS.map(([t, x, y, w, f]) => (
        <g key={t}>
          <rect x={x - w / 2} y={y - 17} width={w} height="34" rx="3" fill={f} stroke="#ec9467" strokeWidth="2" />
          <text x={x} y={y + 7} textAnchor="middle" className="font-['Noto_Sans'] text-[20px]" fill="#a6603a">{t}</text>
        </g>
      ))}
      <g className="font-['Noto_Sans']" textAnchor="middle" stroke="#f5ac8e" strokeWidth="3" paintOrder="stroke">
        {STREETS.map(([t, x, y, r]) => (
          <text key={t} transform={`translate(${x} ${y}) rotate(${r})`} y="6" className="text-[17.5px]" fill="#905440">{t}</text>
        ))}
        {PLACES.map(([t, x, y, s, f], i) => (
          <text key={i} x={x} y={y + s * 0.36} fontSize={s} fill={f}>{t}</text>
        ))}
        {STATIONS.map(([t, x, y]) => (
          <text key={t} x={x} y={y + 7} className="text-[20.500px] font-bold" fill="#a8616c">{t}</text>
        ))}
        {ITALICS.map(([t, x, y, s, f]) => (
          <text key={t} x={x} y={y + 7} fontSize={s} className="italic" fill={f}>{t}</text>
        ))}
        <text transform="translate(2362 955) rotate(-9)" y="6" className="text-[20px]" fill="#c97a6c">London</text>
        <text x="728" y="456" textAnchor="start" className="text-[20px] font-semibold" fill="#a8616c">ston</text>
        <text x="728" y="1003" textAnchor="start" className="text-[20px] font-semibold" fill="#a8616c">ge</text>
        <text x="728" y="1028" textAnchor="start" className="text-[20px] font-semibold" fill="#a8616c">et</text>
      </g>
      {[[1270, 844], [1316, 860], [1362, 824], [1240, 886]].map(([x, y]) => (
        <g key={x}>
          <circle cx={x} cy={y} r="14" fill="#e13b26" />
          <path d={`M${x - 8} ${y}h16M${x} ${y - 8}v16`} stroke="#f6b8a4" strokeWidth="4" strokeLinecap="butt" />
        </g>
      ))}
      <circle cx="1446" cy="632" r="14" fill="#000" />
      <circle cx="1011.5" cy="1155.5" r="11.5" fill="#1a95ff" stroke="#fff" strokeWidth="2.5" />
    </svg>
  );
}

/* ---------- icons ---------- */

function Icon({ children, className = "", ...rest }) {
  return (
    <svg viewBox="0 0 32 32" className={"block h-8 w-8 shrink-0 " + className} fill="none" stroke="#5b5b66" strokeWidth="2.2" strokeLinecap="round" strokeLinejoin="round" {...rest}>
      {children}
    </svg>
  );
}
const Asterisks = () => (
  <Icon stroke="#000" strokeWidth="2.2" strokeLinecap="butt">
    <path d="M8.500 7v18M1 12l15 8M1 20l15-8M23.500 7v18M16 12l15 8M16 20l15-8" />
  </Icon>
);
const SmallAsterisks = () => (
  <Icon stroke="#000" strokeWidth="1.800" strokeLinecap="butt">
    <path d="M9.500 8.500v15M3 12.500l13 7M3 19.500l13-7M22.500 8.500v15M16 12.500l13 7M16 19.500l13-7" />
  </Icon>
);
const RhsTree = () => (
  <Icon stroke="none">
    <path d="M2 0h28v26l-3 6h-2l2-6V2H2z" fill="#3f8577" />
    <ellipse cx="15" cy="12" rx="9" ry="9" fill="#5e9d86" />
    <path d="M10 8h3v3h-3zM16 5h3v3h-3zM17 11h4v3h-4zM11 14h3v3h-3z" fill="#a9c14d" />
    <path d="M13 18h4v9l3 2H10l3-2z" fill="#7fb0a6" />
  </Icon>
);
const Butterfly = () => (
  <Icon stroke="none">
    <rect width="32" height="32" fill="#66852a" />
    <path d="M8 5c5 1 9 6 11 12 1-2 3-3 8-2 1 2-1 3-2 4 1 2 0 3-2 4-2 2-5 2-7 1-3 1-6 0-6-2 0-1 1-2 1-3-3-2-5-8-3-14z" fill="#fff" />
  </Icon>
);
const Urban = () => (
  <Icon stroke="none">
    <rect width="32" height="32" fill="#fff" />
    <path d="M5 22A12 11.500 0 0 1 27 9" fill="none" stroke="#1e6391" strokeWidth="5" strokeDasharray="5 1.5" />
    <path d="M29 11c2 8-1 15-10 17-7 1-12-1-13-4 3-7 8-6 13-7s7-3 10-6z" fill="#8a9c3c" />
    <path d="M12 31c8 0 14-3 17-9" stroke="#8a9c3c" strokeWidth="1.500" fill="none" />
  </Icon>
);
const Close = () => (
  <svg viewBox="0 0 16 16" className="block h-4 w-4 shrink-0" stroke="#1c1b22" strokeWidth="1.700" strokeLinecap="round">
    <path d="M1 1l14 14M15 1L1 15" />
  </svg>
);
const Caret = () => (
  <svg viewBox="0 0 16 10" className="ml-[9px] block h-[10px] w-4 shrink-0" fill="none" stroke="#000" strokeWidth="2.300" strokeLinecap="round" strokeLinejoin="round">
    <path d="M2 1.500l6 6.500 6-6.500" />
  </svg>
);

const TABS = [
  { title: "Forest Research Decision Support", active: true },
  { title: "adapting gardens to climate", icon: <FcGoogle className="h-7 w-7" />, round: true },
  { title: "Intro to urban gardening", icon: <Butterfly /> },
  { title: "RHS Gardening in a Changing" },
  { title: "RHS Gardening in a", icon: <RhsTree /> },
  { title: "Urban farming and", icon: <Urban /> },
  { title: "Gardening-matters", icon: <RhsTree /> },
  { title: "proj / mecklenburgh", icon: <Asterisks /> },
];

function Tab({ tab }) {
  return (
    <div className="h-[88px] w-[280.700px] shrink-0 px-1 pt-2">
      <div className={"flex h-[72px] items-center pl-[17px] pr-[23px] " + (tab.active ? "rounded-lg bg-white shadow-[0_0_4px_rgba(60,60,90,0.55)]" : "")}>
        {tab.icon && (
          <span className={"-ml-px mr-3 flex h-8 w-8 shrink-0 items-center justify-center " + (tab.round ? "rounded-full bg-white" : "")}>{tab.icon}</span>
        )}
        <span
          className={
            "mt-1 min-w-0 flex-1 overflow-hidden whitespace-nowrap font-['Inter'] text-[22px] leading-8 tracking-[0.050px] [mask-image:linear-gradient(to_right,#000_calc(100%-56px),transparent)] " +
            (tab.active ? "text-[#15141a]" : "text-[#5b5b62]")
          }
        >
          {tab.title}
        </span>
        <Close />
      </div>
    </div>
  );
}

const EXTENSIONS = [
  <Icon><path d="M3 6.500Q3 5 5 5h22q2 0 2 1.500V15a13 12 0 0 1-26 0z M10.500 13l5.500 5 5.500-5" /></Icon>,
  <Icon stroke="#0a62e0" strokeWidth="2.600"><path d="M16 1v20M7.500 13l8.500 8.500 8.500-8.500M3 25v2q0 3 3 3h20q3 0 3-3v-2" /></Icon>,
  <Icon><path d="M4 3v26M10 9v20M16 9v20M22 7l6 22" /></Icon>,
  <Icon stroke="none"><path d="M16 0c4 3 9 4 14 4 0 14-2 21-14 28C4 25 2 18 2 4c5 0 10-1 14-4z" fill="#7f0610" /><text x="16" y="20" textAnchor="middle" fill="#fff" className="font-['Inter'] text-[13px] font-bold">uo</text></Icon>,
  <Icon><rect x="1.500" y="5" width="29" height="22" rx="4" /><path d="M14 5v22M5.500 11h4M5.500 16h4M5.500 21h4" /></Icon>,
  <Icon stroke="none"><rect width="32" height="32" rx="3" fill="#d32d2f" /><g fill="#fff"><circle cx="6.500" cy="16" r="2.800" /><circle cx="14.500" cy="16" r="2.800" /><circle cx="22.500" cy="16" r="2.800" /><rect x="27" y="10" width="1.800" height="12" /></g></Icon>,
  <SmallAsterisks />,
  <Icon stroke="none">
    <path d="M1 22L11 11l0-5 5 1 6-1 4-2 3 2 1 5-1 6 1 4-5 6-7 1-4-2-6 1-6-2z" fill="#fff" stroke="#e8842e" strokeWidth="1.600" />
    <path d="M2 21L12 11l7-3 3 1-6 4-4 5-1 5-4 4-4-1zM17 15l5-4 3 1-1 5-4 3-4 0zM11 6l4 1-3 4zM26 5l3 2-2 3zM26 14l2 4-4 5-6 2 5-6z" fill="#111" />
  </Icon>,
  <Icon stroke="none"><rect x="0.500" y="0.500" width="31" height="31" fill="#fff" stroke="#999" /><rect x="16" width="16" height="32" fill="#0c0c0d" /></Icon>,
  <Icon stroke="none"><path d="M5 4l3 4h4l2-3v9h10c3 0 3 2 3 4v9h-2v-9h-3v8h-2v-8h-6v13h-2V18h-2v13H9V18H7v9H5z" fill="#e59a8c" /><path d="M14 7h11c3 3 3 6 1 8H14z" fill="#e0637f" /><path d="M25 8c0-4-3-4-1-7" stroke="#e0637f" strokeWidth="2" fill="none" /></Icon>,
  <Icon stroke="none"><rect x="2" width="28" height="32" rx="3" fill="#c9f5f5" /><path d="M6 2h20q2 0 2 3v8l2 3-2 3v8q0 3-2 3H6q-2 0-2-3v-8l-2-3 2-3V5q0-3 2-3z" fill="#769492" /><text x="16" y="26" textAnchor="middle" fill="#d6fbfb" className="font-['Inter'] text-[28px] font-bold">S</text></Icon>,
  <Icon stroke="#9dbcc4" strokeWidth="2"><rect x="1" y="1" width="30" height="30" rx="5" /><path d="M9 16h14M17 10l6 6-6 6" strokeWidth="2.600" /></Icon>,
  <Icon stroke="none">
    <path d="M17 1c3-2 6 0 6 3l2 2-2 1c2 5 2 9 3 13l5 11-3 1-4-8-3 3-2-1c-4-2-8-5-8-10 0-4 4-7 5-9z" fill="#000" />
    <path d="M0 28l2-4 3-1 3-3 4 1 2 5 6 1v1z" fill="#8b8b8b" />
  </Icon>,
  <Icon stroke="#6b6b6b" strokeWidth="1.800"><path d="M3 1h17l8 9v21H3z" fill="#ddd" /><path d="M20 1v9h8" fill="#f7f7f7" /><rect x="7" y="22" width="17" height="5" fill="#aaa" stroke="none" /></Icon>,
  <Icon stroke="none"><path d="M31 0v32H16C6 32 1 24 1 16S6 0 16 0z" fill="#000" /><rect x="11" y="15" width="13" height="9" fill="#fff" /><path d="M13 15v-3a4 4 0 0 1 8 0" stroke="#fff" strokeWidth="2.400" fill="none" /></Icon>,
  <Icon stroke="#0c0c0d" strokeWidth="2.200"><path d="M6 5h25v21H4q-3 0-3-3V8h4" /><path d="M6 5v17" /><rect x="10" y="9" width="7" height="8" /><path d="M21 9h6M21 13h6M21 17h6M10 22h7M21 22h6" /></Icon>,
  <Icon stroke="none"><rect width="32" height="32" fill="#000" /><g fill="#fff"><path d="M6 6q10-6 20 0v1H6zM6 26h20v2H6zM8 9h3v15H8zM12.500 9h3v15h-3zM17 9h3v15h-3zM21.500 9h3v15h-3z" /></g></Icon>,
];

/* ---------- page content ---------- */

const TABLE1 = {
  widths: [167, 160, 172, 245, 318, 347, 137, 206, 248, 145],
  head: ["Adjustments", "Eastings(m)", "Northings(m)", "Site Grid Reference", "Climate Scenario", "Site Class", "Filter", "Brash", "Drainage", "Fertiliser"],
  row: ["Site defaults", "530618", "182359", "TQ306823", "Baseline climate 1961-1990", "Warm - Sheltered - Slightly dry", "All species", "No brash present", "No drainage installed", "No fertiliser"],
};
const TABLE2 = {
  widths: [177, 383, 244, 239, 277, 363, 348],
  head: ["Modifications", "Accumulated Temperature(AT)", "Continentality(CT)", "Exposure(DAMS) ", "Moisture Deficit (MD)", "Soil Moisture Regime (SMR) ", "Soil Nutrient Regime(SNR) "],
  rows: [
    ["None", "1916", "9", "12", "218", "5(Fresh)", "3(Medium)"],
    ["Final", "1916", "9", "12", "218", "5(Fresh)", "3(Medium)"],
  ],
};

const Select = ({ children }) => (
  <div className="flex h-[38px] w-[450px] items-center border-2 border-r-4 border-b-4 border-black bg-white pl-2 pr-[10px]">
    <span className="-mt-[5px] min-w-0 flex-1 overflow-hidden whitespace-nowrap text-[26.400px] leading-[30px]">{children}</span>
    <Caret />
  </div>
);
const Link = ({ children }) => <a className="text-[#0000ee] underline decoration-2 underline-offset-[3px]">{children}</a>;
const Visited = ({ children }) => <a className="text-[#551a8b] underline decoration-[1.500px] underline-offset-[3px]">{children}</a>;

const PdfIcon = () => (
  <svg viewBox="0 0 32 32" className="block h-8 w-8 shrink-0">
    <path d="M7 1h17l7 8v22H7z" fill="#f4f4f4" stroke="#999" strokeWidth="1.500" />
    <path d="M24 1v8h7z" fill="#ccc" />
    <rect x="0" y="3" width="20" height="9" fill="#c8161d" />
    <path d="M17 14c-1 6-3 10-7 13M16 15c2 6 6 9 12 9M11 25c5-3 9-4 16-1" fill="none" stroke="#ee4b4b" strokeWidth="1.800" />
  </svg>
);
const CsvIcon = () => (
  <svg viewBox="0 0 38 40" className="block h-10 w-[38px] shrink-0">
    <path d="M9 2h17l9 9v24q0 3-3 3H11q-3 0-3-3V5q0-3 3-3" fill="#fff" stroke="#72bd63" strokeWidth="3" />
    <path d="M25 2v10h11z" fill="#72bd63" />
    <rect x="0" y="15" width="30" height="16" rx="3" fill="#72bd63" />
    <text x="15" y="28" textAnchor="middle" fill="#fff" className="font-['Liberation_Sans'] text-[13px] font-bold">CSV</text>
  </svg>
);

const LEGEND = ["nodata", "0-575", "575-775", "775-975", "975-1200", "1200-1600", "1600-2000", "2000-2500", "2500-3500"];

function SidePanel() {
  return (
    <div className="h-[795px] w-[598px] shrink-0 bg-white">
      <p className="ml-4 mt-[30px] w-[570px] text-[24px] leading-[25px]">
        Ecological Site Classification : Amend
        <br />
        site/management variables below then click on map
        <br />
        for species suitability analysis.
      </p>
      <div className="mt-[12px] flex h-[102px] pl-[26px]">
        <h2 className="mt-[49px] w-[250px] text-[27.800px] leading-[32px] font-bold">Soil properties</h2>
        <div className="text-[24px] leading-[49px]">
          <div><Visited>Input vegetation survey</Visited></div>
          <div><Visited>Input soil survey</Visited></div>
        </div>
      </div>
      {["Soil Moisture Regime (SMR):", "Soil Nutrient Regime (SNR):"].map((t) => (
        <div key={t} className="mb-[47px] ml-[26px] mt-[27px]">
          <div className="h-[44px] w-[416px] whitespace-nowrap bg-[#5c2472] pl-2 text-[26.400px] leading-[38px] font-bold text-white">{t}</div>
          <Select>Default (modelled data)</Select>
        </div>
      ))}
      <div className="-mt-[12px] ml-[26px] text-[24px] leading-[45px]">
        <div>Site Management <Visited>[+/-]</Visited></div>
        <div>Options <Visited>[+/-]</Visited></div>
      </div>
      <button className="ml-[302px] mt-[1px] block h-9 w-[280px] bg-[#118111] pb-1 text-center text-[26.400px] leading-[32px] font-bold text-white">Update Results</button>
    </div>
  );
}

function MapPanel() {
  return (
    <div className="relative h-[795px] w-[1700px] overflow-hidden">
      <StreetMap />
      <div className="absolute left-[12px] top-[13px] flex flex-col gap-[2px] rounded-lg bg-white/40 p-[6px] text-white">
        <div className="flex h-[38px] w-[38px] items-center justify-center rounded-t bg-[rgba(0,60,136,0.5)]">
          <svg viewBox="0 0 16 16" className="h-4 w-4"><path d="M0 8h16M8 0v16" stroke="#fff" strokeWidth="4" /></svg>
        </div>
        <div className="flex h-[37px] w-[38px] items-center justify-center rounded-b bg-[rgba(0,60,136,0.5)]">
          <svg viewBox="0 0 16 16" className="h-4 w-4"><path d="M0 8h16" stroke="#fff" strokeWidth="4" /></svg>
        </div>
      </div>
      <div className="absolute bottom-[15px] left-[15px] rounded-lg bg-[rgba(0,60,136,0.3)] px-[6px] pt-[6px] pb-[6px]">
        <div className="h-[23px] w-[138px] border-2 border-t-0 border-[#eee] text-center text-[20px] leading-[19px] text-[#eee]">200 m</div>
      </div>
      <div className="absolute bottom-[12px] right-[12px] rounded-lg bg-white/40 p-[6px]">
        <div className="flex h-[38px] w-[38px] items-center justify-center rounded bg-[rgba(0,60,136,0.5)] text-[27px] leading-none font-bold text-white">i</div>
      </div>
      <div className="absolute right-0 top-0 h-[559px] w-[309px] border-b-2 border-l-2 border-[#c9bda9] bg-white">
        <div className="ml-[16px] mt-[29px] text-[24px] leading-[28px]">Accumulated temperature</div>
        <div className="ml-[18px] mt-[26px] flex">
          <div className="w-[20px]">
            <svg viewBox="0 0 20 48" className="block h-12 w-5"><path d="M0 1l20 46M20 1L0 47" stroke="#ff3b3b" strokeWidth="2.500" /></svg>
            <div className="mt-[3px] h-[382px] bg-[linear-gradient(to_bottom,#eee_0%,#6a22ff_5.500%,#6a22ff_12%,#ccffff_18%,#ccffff_25%,#22ff44_31%,#22ff44_37%,#ccff99_44%,#ccff99_50%,#ff9940_56%,#ff9940_63%,#ff663a_70%,#ff663a_75%,#ff333a_82%,#ff333a_88%,#ff0d3a_95%,#ff0d3a_100%)]" />
          </div>
          <div className="ml-[24px] mt-[10px] font-['DejaVu_Sans'] text-[24.600px] leading-[48px] text-[#2b2b2b]">
            {LEGEND.map((t) => (
              <div key={t}>{t}</div>
            ))}
          </div>
        </div>
      </div>
    </div>
  );
}

const cell = "border-l-2 border-[#cccc99] text-center whitespace-nowrap last:border-r-2";

function Widths({ widths }) {
  return (
    <colgroup>
      {widths.map((w, i) => (
        <col key={i} style={{ width: w }} />
      ))}
    </colgroup>
  );
}

export default function App() {
  return (
    <div className="h-[1974px] w-[2842px] overflow-hidden bg-white pt-[76px] pl-[112px] font-['Liberation_Sans',sans-serif] text-black">
      <div className="h-[1750px] w-[2618px] overflow-hidden rounded-[20px] bg-white shadow-[0_0_0_1px_rgba(0,0,0,0.25),0_0_4px_rgba(0,0,0,0.25),0_36px_72px_rgba(0,0,0,0.5)]">
        {/* tab strip */}
        <div className="flex h-[88px] bg-[#f0f0f4]">
          <div className="flex w-[211px] shrink-0 items-center gap-4 pl-[26px]">
            <i className="h-6 w-6 rounded-full border border-[#e0443e] bg-[#ff5f57]" />
            <i className="h-6 w-6 rounded-full border border-[#dea123] bg-[#febc2e]" />
            <i className="h-6 w-6 rounded-full border border-[#1aab29] bg-[#28c840]" />
          </div>
          {TABS.map((t) => (
            <Tab key={t.title} tab={t} />
          ))}
          <svg viewBox="0 0 24 24" className="ml-[30px] mt-[33px] h-6 w-6" stroke="#5b5b66" strokeWidth="2.200" strokeLinecap="round">
            <path d="M12 1v22M1 12h22" />
          </svg>
        </div>

        {/* navigation bar */}
        <div className="flex h-[82px] items-center overflow-hidden border-b-2 border-[#cccccc] bg-[#f9f9fb] pl-8 pt-px">
          <Icon><path d="M29 16H3M15 4.500L3 16l12 11.500" /></Icon>
          <Icon className="ml-10" stroke="#bdbdc4"><path d="M3 16h26M17 4.500L29 16 17 27.500" /></Icon>
          <Icon className="ml-10">
            <path d="M26 7.500A12.500 12.500 0 1 0 28.500 16" />
            <path d="M29 2v9.500h-9.500z" fill="#5b5b66" strokeWidth="1" />
          </Icon>
          <Icon className="ml-[39px]"><path d="M2 15L16 2l14 13M5 13v14q0 3 3 3h16q3 0 3-3V13M12.500 30v-8a3.500 3.500 0 0 1 7 0v8" /></Icon>
          <div className="ml-[33px] flex h-16 w-[700px] shrink-0 items-center rounded-lg bg-[#f0f0f4] pl-4 pr-4">
            <Icon><path d="M16 1.500L28.500 6q1.500 12-2.500 17-3 5-10 8-7-3-10-8Q2 18 3.500 6z" /></Icon>
            <Icon className="ml-6">
              <path d="M9 9a6.500 6.500 0 0 1 13-1v8h3q2 0 2 2v10q0 2-2 2H6q-2 0-2-2V18q0-2 2-2h9" />
              <path d="M3 5l26 25" stroke="#ff4f5e" strokeWidth="2.600" />
            </Icon>
            <span className="ml-[20px] flex-1 whitespace-nowrap font-['Inter'] text-[28px] leading-10 tracking-[-0.730px] text-[#85858b]">
              www.<span className="text-[#15141a]">forestdss.org.uk</span>/geoforestdss/
            </span>
            <Icon><path d="M16 2l4.200 9 9.800 1.200-7.200 6.800 1.900 10L16 24.200 7.300 29l1.900-10L2 12.200l9.800-1.200z" /></Icon>
          </div>
          <div className="ml-5 flex h-16 w-[250px] shrink-0 items-center rounded-lg bg-[#f0f0f4] pl-[17px]">
            <Icon><circle cx="13" cy="13" r="10.500" /><path d="M21 21l9 9" /></Icon>
            <span className="ml-[13px] mt-px font-['Inter'] text-[28px] leading-10 tracking-[-0.600px] text-[#5b5b66]">Search</span>
          </div>
          <div className="ml-8 flex shrink-0 gap-10">
            {EXTENSIONS.map((e, i) => (
              <React.Fragment key={i}>{e}</React.Fragment>
            ))}
            <div className="h-8 w-8 bg-[#f9b8bb] text-center font-['Noto_Sans'] text-[14.500px] leading-[15px] text-[#111]">Cors<br />E</div>
            <Icon className="-ml-[6px]"><path d="M10 4l10 12-10 12" /></Icon>
          </div>
        </div>

        {/* page */}
        <div className="h-[1580px] overflow-hidden pl-4 text-[24px] leading-[28px]">
          <div className="-mt-[11px]"><Link>Contact email</Link></div>
          <div className="mt-[17px] flex h-[45px]">
            <span className="mt-[10px] w-[415px] whitespace-nowrap">Enter Grid Reference (e.g. NT090950)</span>
            <div className="mt-[7px] h-[38px] w-[214px] border-2 border-r-4 border-b-4 border-black bg-white" />
            <button className="ml-[6px] block h-[44px] w-[60px] rounded-lg border-2 border-[#8f8f9d] bg-[#e9e9ed] text-[26.400px] leading-[38px]">Go</button>
            <span className="ml-[46px] mt-[10px] w-[307px] whitespace-nowrap">Select decision support tool:</span>
            <div className="mt-[7px]"><Select>Ecological Site Classification (Tree species)</Select></div>
          </div>

          <div className="mt-[41px] flex h-[799px] w-[2302px] border-2 border-[#c9bda9]">
            <SidePanel />
            <MapPanel />
          </div>

          <div className="mt-[17px] flex h-10 items-end whitespace-nowrap">
            <CsvIcon />
            <span className="mb-[2px] ml-2"><Link>Download results as a CSV file</Link></span>
            <span className="mb-[3px] ml-[8px] mr-[7px] text-[20px]">|</span>
            <PdfIcon />
            <span className="mb-[2px] ml-[7px]"><Link>Download results as a PDF file (numeric)</Link></span>
            <span className="mb-[3px] ml-[7px] mr-[7px] text-[20px]">|</span>
            <PdfIcon />
            <span className="mb-[2px] ml-[7px]"><Link>Download results as a PDF file (symbols)</Link></span>
          </div>

          <table className="mt-[48px] w-[2145px] table-fixed border-separate border-spacing-0">
            <Widths widths={TABLE1.widths} />
            <tbody>
              <tr className="h-[47px]">
                {TABLE1.head.map((h, i) => (
                  <th key={h} className={cell + " border-t-2 pb-[4px] font-bold " + (i === 5 ? "border-t-[#a3a37a]" : "")}>{h}</th>
                ))}
              </tr>
              <tr className="h-[49px]">
                {TABLE1.row.map((h) => (
                  <td key={h} className={cell + " border-y-2 pb-[4px]"}>{h}</td>
                ))}
              </tr>
            </tbody>
          </table>

          <div className="mt-[25px] h-[121px] w-[2586px] border-2 border-[#cccc99]">
            <div className="h-[47px] border-b-2 border-[#cccc99] pl-[10px] leading-[41px] font-bold">Site Description</div>
            <p className="whitespace-nowrap pl-[10px] pt-[8px] leading-[25px]">
              The site has a warm, sheltered and slightly dry climate. The area is coastal (within 3km of sea) so certain species may experience saltburn, a protective belt comprising one or more of Sycamore, Sitka spruce or Lodgepole pine may mitigate
              <br />
              those effects. The soils are fresh moisture status and medium nutrient status.
            </p>
          </div>

          <table className="mt-[25px] w-[2031px] table-fixed border-separate border-spacing-0">
            <Widths widths={TABLE2.widths} />
            <tbody>
              <tr className="h-[49px]">
                {TABLE2.head.map((h, i) => (
                  <th key={h} className={cell + " border-t-2 pb-[5px] font-bold"}>
                    {h}
                    {i > 0 && <span className="underline decoration-dotted decoration-[1.500px] underline-offset-[6px]">?</span>}
                  </th>
                ))}
              </tr>
              {TABLE2.rows.map((r, n) => (
                <tr key={n} className={n === 1 ? "h-[49px]" : "h-[47px]"}>
                  {r.map((v, i) => (
                    <td key={i} className={cell + " border-t-2 pb-[4px] " + (n === 1 ? "border-b-2" : "")}>{v}</td>
                  ))}
                </tr>
              ))}
            </tbody>
          </table>

          <div className="mt-[59px] flex h-[41px] items-start whitespace-nowrap">
            <span className="mt-[28px] w-[233px]">Suitability key</span>
            <svg viewBox="0 0 40 40" className="h-10 w-10"><circle cx="20" cy="20" r="18.500" fill="#267326" /></svg>
            <span className="ml-[47px] mt-[28px] w-[352px]">Very Suitable (0.75-1.00)</span>
            <svg viewBox="0 0 40 40" className="h-10 w-10"><circle cx="20" cy="20" r="18.500" fill="#70d070" /></svg>
            <span className="ml-[47px] mt-[28px] w-[296px]">Suitable (0.50-0.74)</span>
            <svg viewBox="0 0 44 40" className="h-10 w-11"><path d="M22 1l21 39H1z" fill="#ebcf37" /></svg>
            <span className="ml-[44px] mt-[28px] w-[299px]">Marginal (0.30-0.49)</span>
            <svg viewBox="0 0 40 40" className="h-10 w-10"><path d="M14 4h12l9 9v14l-9 9H14l-9-9V13z" fill="#ee1c25" /></svg>
            <span className="ml-[43px] mt-[28px]">Unsuitable (0.0-0.29)</span>
          </div>
          <div className="mt-[37px] whitespace-nowrap pl-[35px]">[species name] - species with pest/disease constraints</div>
        </div>
      </div>
    </div>
  );
}
